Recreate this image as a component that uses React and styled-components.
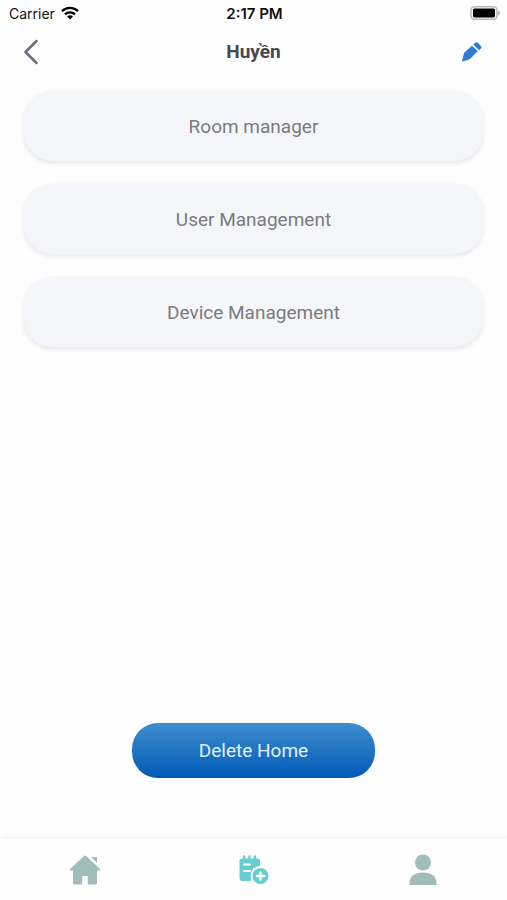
import styled, { createGlobalStyle } from 'styled-components';

const GlobalStyle = createGlobalStyle`
	* {
		box-sizing: border-box;
	}

	body {
		margin: 0;
		background-color: #fefefe;
		font-family: Roboto, 'Liberation Sans', sans-serif;
	}

	button {
		border: none;
		background: none;
		font-family: inherit;
		cursor: pointer;
	}

	svg {
		display: block;
		flex-shrink: 0;
	}
`;

const Screen = styled.div`
	display: flex;
	flex-direction: column;
	min-height: 100vh;
`;

const StatusBar = styled.div`
	display: grid;
	grid-template-columns: 1fr auto 1fr;
	align-items: center;
	height: 26px;
	padding: 0 7px 0 9px;
	color: #111;
	font-family: Inter, sans-serif;
	font-size: 14px;
`;

const Carrier = styled.div`
	display: flex;
	align-items: center;
	gap: 6px;
`;

const Time = styled.time`
	font-size: 15px;
	font-weight: 600;
`;

const Battery = styled.div`
	justify-self: end;
`;

const Header = styled.header`
	display: grid;
	grid-template-columns: 24px 1fr 24px;
	align-items: center;
	height: 52px;
	padding: 0 24px;
`;

const Title = styled.h1`
	margin: 0;
	color: #45484f;
	font-size: 19px;
	font-weight: 700;
	line-height: 24px;
	text-align: center;
`;

const IconButton = styled.button`
	display: flex;
	align-items: center;
	justify-content: ${({ $align }) => $align};
	height: 48px;
	padding: 0;
`;

const Main = styled.main`
	display: flex;
	flex: 1;
	flex-direction: column;
	justify-content: space-between;
	align-items: center;
	padding: 13px 24px 61px;
`;

const Menu = styled.div`
	display: flex;
	flex-direction: column;
	gap: 23px;
	width: 100%;
`;

const MenuButton = styled.button`
	height: 70px;
	border-radius: 28px;
	background-color: #f4f6fa;
	box-shadow: 0 2px 5px rgba(0, 0, 0, 0.1);
	color: #7b7b7d;
	font-size: 19px;
`;

const DeleteButton = styled.button`
	width: 53%;
	height: 55px;
	border-radius: 26px;
	background-image: linear-gradient(#3e8ecd, #0059b5);
	color: #e2f1fb;
	font-size: 19px;
`;

const TabBar = styled.nav`
	display: grid;
	grid-template-columns: repeat(3, 1fr);
	height: 61px;
	box-shadow: 0 -2px 5px rgba(0, 0, 0, 0.05);
`;

const Tab = styled.button`
	display: flex;
	align-items: center;
	justify-content: center;
	padding: 0;
	color: ${({ $active }) => ($active ? '#66cdd3' : '#a0bcbb')};
`;

const WifiIcon = () => (
	<svg width='18' height='14' viewBox='0 0 18 14' fill='none' stroke='#000' strokeWidth='2.4'>
		<path d='M1 5.2a11.4 11.4 0 0 1 16 0' />
		<path d='M4 8.4a7.1 7.1 0 0 1 10 0' />
		<path d='M9 13.6 6 10.6a4.3 4.3 0 0 1 6 0z' fill='#000' stroke='none' />
	</svg>
);

const BatteryIcon = () => (
	<svg width='30' height='14' viewBox='0 0 30 14'>
		<rect x='1' y='0.75' width='26' height='12.5' rx='3.5' fill='#fff' stroke='#b8b8b8' strokeWidth='1.5' />
		<rect x='3' y='2.5' width='22' height='9' rx='1.5' fill='#000' />
		<path d='M28.2 4.5a2.7 2.7 0 0 1 0 5z' fill='#aaa' />
	</svg>
);

const BackIcon = () => (
	<svg width='16' height='26' viewBox='0 0 16 26' fill='none' stroke='#6d6d7b' strokeWidth='2.5'>
		<path d='M12.5 2 1.5 13l11 11' strokeLinecap='round' strokeLinejoin='round' />
	</svg>
);

const PencilIcon = () => (
	<svg width='22' height='20' viewBox='0 0 22 20' fill='#2f7bd6'>
		<path d='M0.9 19.8 2.9 11.8Q3.2 10.8 3.9 10.1L11 3.7l5.8 5.4-7.3 7.5q-.7.7-1.5 1z' />
		<path d='m12.3 2.6 1.8-1.8q1.3-1.2 2.7 0L19.9 3.9q1.2 1.3 0 2.5l-1.9 1.8z' />
	</svg>
);

const HomeIcon = () => (
	<svg width='32' height='30' viewBox='0 0 32 30' fill='currentColor'>
		<path d='M16 0.5Q16.6 0.5 17 1L31 14q.7 1.1-.5 1.5H28v12.7q0 1.3-1.3 1.3H18.8v-7.6q0-.9-.9-.9H14q-.9 0-.9.9v7.6H5.3Q4 29.5 4 28.2V15.5H1.5q-1.2-.4-.5-1.5L15 1q.4-.5 1-.5z' />
		<path d='M22 2h6v6z' />
	</svg>
);

const NotesIcon = () => (
	<svg width='30' height='30' viewBox='0 0 30 30'>
		<path
			d='M3 3.5H4V1.5a1.2 1.2 0 0 1 2.4 0V3.5H9.3V1.5a1.2 1.2 0 0 1 2.4 0V3.5H14.8V1.5a1.2 1.2 0 0 1 2.4 0V3.5H18.5Q21 3.5 21 6V13H14L12 26H3.5Q.5 26 .5 23V6Q.5 3.5 3 3.5z'
			fill='currentColor'
		/>
		<path d='M5 9.5h6M5 16h6' stroke='#fefefe' strokeWidth='2' strokeLinecap='round' />
		<circle cx='21.5' cy='21' r='10' fill='#fefefe' />
		<circle cx='21.5' cy='21' r='8' fill='currentColor' />
		<path d='M21.5 17.5v7M18 21h7' stroke='#fefefe' strokeWidth='2.4' strokeLinecap='round' />
	</svg>
);

const UserIcon = () => (
	<svg width='28' height='32' viewBox='0 0 28 32' fill='currentColor'>
		<circle cx='14' cy='8.5' r='8' />
		<path d='M.5 31V29C.5 22 6 18.5 14 18.5S27.5 22 27.5 29v2z' />
	</svg>
);

const menuItems = ['Room manager', 'User Management', 'Device Management'];

const App = () => {
	return (
		<Screen>
			<GlobalStyle />
			<StatusBar>
				<Carrier>
					Carrier
					<WifiIcon />
				</Carrier>
				<Time>2:17 PM</Time>
				<Battery>
					<BatteryIcon />
				</Battery>
			</StatusBar>

			<Header>
				<IconButton aria-label='Back' $align='flex-start'>
					<BackIcon />
				</IconButton>
				<Title>Huyền</Title>
				<IconButton aria-label='Edit' $align='flex-end'>
					<PencilIcon />
				</IconButton>
			</Header>

			<Main>
				<Menu>
					{menuItems.map((item) => (
						<MenuButton key={item}>{item}</MenuButton>
					))}
				</Menu>
				<DeleteButton>Delete Home</DeleteButton>
			</Main>

			<TabBar>
				<Tab aria-label='Home'>
					<HomeIcon />
				</Tab>
				<Tab aria-label='Notes' $active>
					<NotesIcon />
				</Tab>
				<Tab aria-label='Profile'>
					<UserIcon />
				</Tab>
			</TabBar>
		</Screen>
	);
};

export default App;
